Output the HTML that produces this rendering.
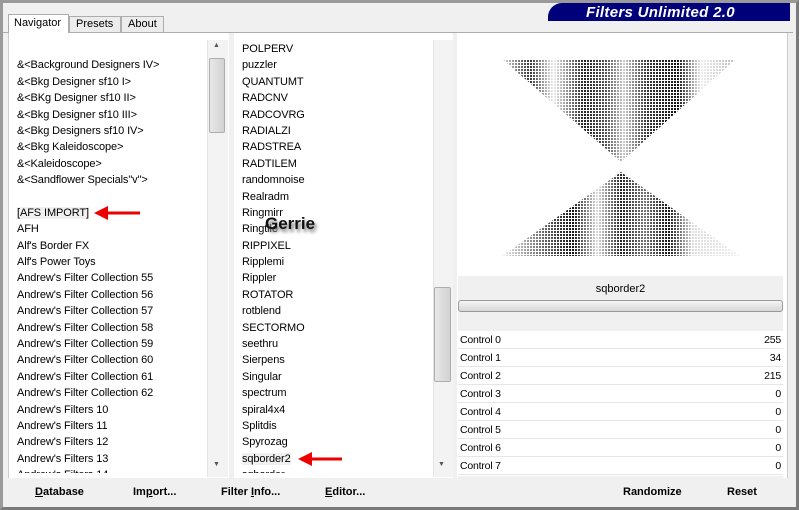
<!DOCTYPE html>
<html><head><meta charset="utf-8"><style>
*{margin:0;padding:0;box-sizing:border-box}
body{width:799px;height:510px;overflow:hidden;background:#f0f0f0;font-family:"Liberation Sans",sans-serif;font-size:11px;color:#000;position:relative}
.abs{position:absolute}
.frame{left:0;top:0;width:799px;height:510px;border:3px solid #9a9a9a;border-right-color:#7a7a7a;border-bottom-color:#7a7a7a}
.list div{height:16.4px;line-height:16.4px;white-space:nowrap;letter-spacing:-0.1px}
.sb{background:#f3f3f3;border-left:1px solid #e4e4e4}
.thumb{background:linear-gradient(90deg,#e8e8e8,#d2d2d2);border:1px solid #adadad;border-radius:2px}
.ctl{left:458px;width:325px;height:18px;border-bottom:1px solid #e6e6e6;background:#fff;font-size:10.5px;letter-spacing:-0.2px}
.ctl span{position:absolute;top:3px}
.btn{font-weight:bold;top:486px}
</style></head><body>
<div class="abs frame"></div>
<div class="abs" style="left:548px;top:3px;width:242px;height:18px;background:#00007a;border-radius:14px 0 0 0"></div>
<div class="abs" style="left:586px;top:4px;color:#fff;font-weight:bold;font-style:italic;font-size:15px;letter-spacing:0.3px">Filters Unlimited 2.0</div>
<div class="abs" style="left:3px;top:32px;width:790px;height:1px;background:#adadad"></div>
<div class="abs" style="left:8px;top:14px;width:61px;height:20px;background:#fff;border:1px solid #adadad;border-bottom:none;padding:2px 0 0 5px">Navigator</div>
<div class="abs" style="left:69px;top:16px;width:52px;height:16px;background:#ececec;border:1px solid #adadad;border-bottom:none;padding:1px 0 0 6px">Presets</div>
<div class="abs" style="left:121px;top:16px;width:43px;height:16px;background:#ececec;border:1px solid #adadad;border-bottom:none;padding:1px 0 0 6px">About</div>
<div class="abs" style="left:8px;top:33px;width:780px;height:445px;background:#fff;border-left:1px solid #ccc;border-right:1px solid #ccc"></div>
<div class="abs list" style="left:17px;top:41px">
<div></div><div>&amp;&lt;Background Designers IV&gt;</div><div>&amp;&lt;Bkg Designer sf10 I&gt;</div><div>&amp;&lt;BKg Designer sf10 II&gt;</div><div>&amp;&lt;Bkg Designer sf10 III&gt;</div><div>&amp;&lt;Bkg Designers sf10 IV&gt;</div><div>&amp;&lt;Bkg Kaleidoscope&gt;</div><div>&amp;&lt;Kaleidoscope&gt;</div><div>&amp;&lt;Sandflower Specials"v"&gt;</div><div></div><div><span style="background:#f0f0f0">[AFS IMPORT]</span></div><div>AFH</div><div>Alf's Border FX</div><div>Alf's Power Toys</div><div>Andrew's Filter Collection 55</div><div>Andrew's Filter Collection 56</div><div>Andrew's Filter Collection 57</div><div>Andrew's Filter Collection 58</div><div>Andrew's Filter Collection 59</div><div>Andrew's Filter Collection 60</div><div>Andrew's Filter Collection 61</div><div>Andrew's Filter Collection 62</div><div>Andrew's Filters 10</div><div>Andrew's Filters 11</div><div>Andrew's Filters 12</div><div>Andrew's Filters 13</div><div style="height:6px;overflow:hidden">Andrew's Filters 14</div>
</div>
<div class="abs sb" style="left:207px;top:40px;width:21px;height:437px"></div>
<div class="abs" style="left:213px;top:42px;font-size:7px;color:#555">▲</div>
<div class="abs" style="left:213px;top:461px;font-size:7px;color:#555">▼</div>
<div class="abs thumb" style="left:209px;top:58px;width:16px;height:75px"></div>
<div class="abs" style="left:229px;top:33px;width:5px;height:445px;background:#f0f0f0"></div>
<div class="abs list" style="left:242px;top:41px">
<div>POLPERV</div><div>puzzler</div><div>QUANTUMT</div><div>RADCNV</div><div>RADCOVRG</div><div>RADIALZI</div><div>RADSTREA</div><div>RADTILEM</div><div>randomnoise</div><div>Realradm</div><div>Ringmirr</div><div>Ringtile</div><div>RIPPIXEL</div><div>Ripplemi</div><div>Rippler</div><div>ROTATOR</div><div>rotblend</div><div>SECTORMO</div><div>seethru</div><div>Sierpens</div><div>Singular</div><div>spectrum</div><div>spiral4x4</div><div>Splitdis</div><div>Spyrozag</div><div><span style="background:#f0f0f0">sqborder2</span></div><div style="height:6px;overflow:hidden">sqborder</div>
</div>
<div class="abs" style="left:265px;top:214px;font-weight:bold;font-size:17px;color:#111;text-shadow:2px 3px 3px #777">Gerrie</div>
<div class="abs sb" style="left:433px;top:40px;width:20px;height:437px"></div>
<div class="abs" style="left:438px;top:461px;font-size:7px;color:#555">▼</div>
<div class="abs thumb" style="left:434px;top:287px;width:17px;height:95px"></div>
<div class="abs" style="left:453px;top:33px;width:4px;height:445px;background:#f0f0f0"></div>
<svg class="abs" style="left:92px;top:205px" width="50" height="16"><path d="M48 8H14" stroke="#e00" stroke-width="3"/><path d="M2 8L16 1V15Z" fill="#e00"/></svg>
<svg class="abs" style="left:296px;top:451px" width="50" height="16"><path d="M46 8H14" stroke="#e00" stroke-width="3"/><path d="M2 8L16 1V15Z" fill="#e00"/></svg>
<svg class="abs" style="left:500px;top:57px" width="242" height="202">
<defs><pattern id="w" width="3" height="3" patternUnits="userSpaceOnUse"><path d="M0 2.5H3M2.5 0V3" stroke="#fff" stroke-width="1"/></pattern>
<linearGradient id="g" x1="0" x2="1"><stop offset="0" stop-color="#ddd"/><stop offset=".12" stop-color="#333"/><stop offset=".22" stop-color="#eee"/><stop offset=".35" stop-color="#222"/><stop offset=".45" stop-color="#555"/><stop offset=".52" stop-color="#ccc"/><stop offset=".62" stop-color="#333"/><stop offset=".75" stop-color="#111"/><stop offset=".85" stop-color="#eee"/><stop offset="1" stop-color="#bbb"/></linearGradient>
<linearGradient id="g2" x1="0" x2="1"><stop offset="0" stop-color="#eee"/><stop offset=".2" stop-color="#555"/><stop offset=".3" stop-color="#111"/><stop offset=".4" stop-color="#ddd"/><stop offset=".5" stop-color="#222"/><stop offset=".6" stop-color="#777"/><stop offset=".7" stop-color="#111"/><stop offset=".8" stop-color="#ddd"/><stop offset="1" stop-color="#eee"/></linearGradient></defs>
<path d="M2 2H236L121 105Z" fill="url(#g)"/>
<path d="M121 115L240 199H2Z" fill="url(#g2)"/>
<rect width="242" height="202" fill="url(#w)"/>
</svg>
<div class="abs" style="left:458px;top:276px;width:325px;height:56px;background:#f0f0f0"></div>
<div class="abs" style="left:458px;top:283px;width:325px;text-align:center">sqborder2</div>
<div class="abs" style="left:458px;top:300px;width:325px;height:12px;border:1px solid #999;border-radius:3px;background:linear-gradient(#f4f4f4,#d6d6d6)"></div>
<div class="abs ctl" style="top:331px"><span style="left:2px">Control 0</span><span style="right:2px">255</span></div>
<div class="abs ctl" style="top:349px"><span style="left:2px">Control 1</span><span style="right:2px">34</span></div>
<div class="abs ctl" style="top:367px"><span style="left:2px">Control 2</span><span style="right:2px">215</span></div>
<div class="abs ctl" style="top:385px"><span style="left:2px">Control 3</span><span style="right:2px">0</span></div>
<div class="abs ctl" style="top:403px"><span style="left:2px">Control 4</span><span style="right:2px">0</span></div>
<div class="abs ctl" style="top:421px"><span style="left:2px">Control 5</span><span style="right:2px">0</span></div>
<div class="abs ctl" style="top:439px"><span style="left:2px">Control 6</span><span style="right:2px">0</span></div>
<div class="abs ctl" style="top:457px"><span style="left:2px">Control 7</span><span style="right:2px">0</span></div>
<div class="abs" style="left:10px;top:478px;width:442px;height:27px;background:#f0f0f0"></div>
<div class="abs" style="left:458px;top:476px;width:325px;height:29px;background:#f0f0f0"></div>
<div class="abs btn" style="left:35px"><u>D</u>atabase</div>
<div class="abs btn" style="left:133px">Im<u>p</u>ort...</div>
<div class="abs btn" style="left:221px">Filter <u>I</u>nfo...</div>
<div class="abs btn" style="left:325px"><u>E</u>ditor...</div>
<div class="abs btn" style="left:623px">Randomize</div>
<div class="abs btn" style="left:727px">Reset</div>
</body></html>
